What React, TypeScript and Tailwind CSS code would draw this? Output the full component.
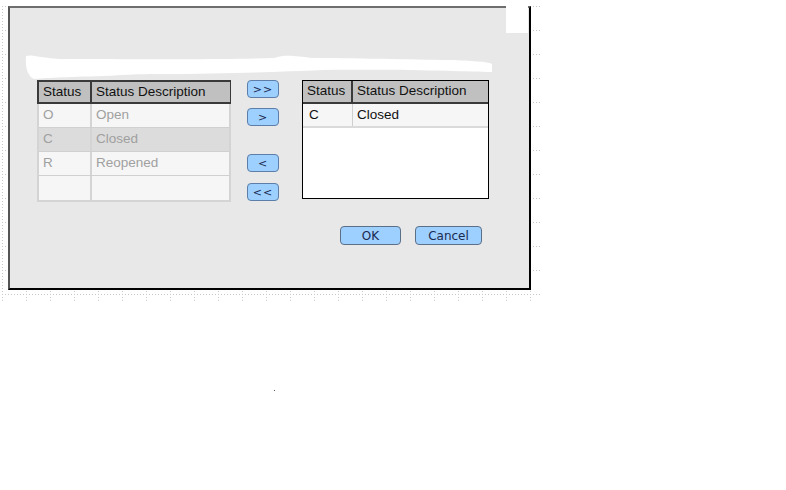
import React from 'react';

type Row = { code: string; desc: string };

const available: Row[] = [
    { code: 'O', desc: 'Open' },
    { code: 'C', desc: 'Closed' },
    { code: 'R', desc: 'Reopened' },
    { code: '', desc: '' },
];

const selected: Row[] = [{ code: 'C', desc: 'Closed' }];

const GridBackdrop = () => (
    <svg className="absolute inset-0" width="541" height="296">
        <defs>
            <pattern id="grid" width="24" height="24" patternUnits="userSpaceOnUse" x="2" y="0">
                <path d="M0 0.5 H24 M0.5 0 V24" stroke="#c8c8c8" strokeWidth="1" strokeDasharray="1 2" fill="none" />
            </pattern>
        </defs>
        <rect width="541" height="296" fill="url(#grid)" />
    </svg>
);

const MoveButton = ({ label, className = '' }: { label: string; className?: string }) => (
    <button
        type="button"
        className={`h-[18px] w-[32px] rounded-[4px] border border-[#5c7ea8] bg-[#9dcfff] text-[11px] leading-none tracking-[1px] text-[#1a2a50] ${className}`}
        style={{ fontFamily: '"DejaVu Sans", Verdana, sans-serif' }}
    >
        {label}
    </button>
);

const ActionButton = ({ label, width }: { label: string; width: string }) => (
    <button
        type="button"
        className={`h-[19px] ${width} rounded-[4px] border border-[#5c6f88] bg-[#9dcfff] text-[12px] leading-none text-[#1a2a50]`}
        style={{ fontFamily: '"DejaVu Sans", Verdana, sans-serif' }}
    >
        {label}
    </button>
);

export default function App() {
    return (
        <div className="relative h-[490px] w-[786px] bg-white" style={{ fontFamily: '"Liberation Sans", Arial, sans-serif' }}>
            <div className="relative h-[296px] w-[541px]">
                <GridBackdrop />

                {/* Dialog */}
                <div className="relative ml-[8px] mt-[6px] h-[284px] w-[523px] border-t-2 border-l-2 border-r-2 border-b-2 border-t-[#6e6e6e] border-l-[#555] border-r-black border-b-black bg-[#e8e8e8]">
                    {/* erased title smear */}
                    <svg className="absolute left-[14px] top-[42px]" width="470" height="32">
                        <path
                            d="M2 6 C8 4 14 8 40 9 C120 9 200 10 250 8 C262 4 270 6 290 8 C340 8 400 10 430 10 C450 11 466 12 468 14 L468 22 C440 22 400 19 300 20 C250 22 200 24 140 24 C110 24 100 25 80 26 C40 27 20 28 10 29 C4 26 1 18 2 6 Z"
                            fill="#ffffff"
                        />
                    </svg>
                    <div className="absolute right-[1px] top-[-4px] h-[29px] w-[22px] bg-white" />

                    <div className="flex flex-col pl-[27px] pt-[72px]">
                        <div className="flex items-start">
                            {/* Available statuses */}
                            <div className="w-[194px] text-[13.5px]">
                                <div className="flex h-[24px] border-t-2 border-l-2 border-r border-b-2 border-[#3a3a3a] bg-[#c0c0c0] text-[#111]">
                                    <div className="flex w-[53px] items-center border-r-2 border-[#3a3a3a] pl-[4px]">Status</div>
                                    <div className="flex flex-1 items-center pl-[4px]">Status Description</div>
                                </div>
                                <div className="border-x-2 border-b-2 border-[#d4d4d4] text-[#a0a0a0]">
                                    {available.map((row, i) => (
                                        <div
                                            key={i}
                                            className={`flex h-[24px] ${i < available.length - 1 ? 'border-b border-[#d0d0d0]' : ''} ${i === 1 ? 'bg-[#dcdcdc]' : 'bg-[#f6f6f6]'}`}
                                        >
                                            <div className="flex w-[53px] items-center border-r-2 border-[#d4d4d4] pl-[4px]">{row.code}</div>
                                            <div className="flex flex-1 items-center pl-[4px]">{row.desc}</div>
                                        </div>
                                    ))}
                                </div>
                            </div>

                            {/* Move buttons */}
                            <div className="ml-[16px] flex flex-col">
                                <MoveButton label=">>" />
                                <MoveButton label=">" className="mt-[10px]" />
                                <MoveButton label="<" className="mt-[28px]" />
                                <MoveButton label="<<" className="mt-[11px]" />
                            </div>

                            {/* Selected statuses */}
                            <div className="ml-[23px] h-[119px] w-[187px] border border-black bg-white text-[13.5px] text-[#111]">
                                <div className="flex h-[23px] border-b-2 border-[#3a3a3a] bg-[#c0c0c0]">
                                    <div className="flex w-[50px] items-center border-r-2 border-[#3a3a3a] pl-[4px]">Status</div>
                                    <div className="flex flex-1 items-center pl-[4px]">Status Description</div>
                                </div>
                                {selected.map((row, i) => (
                                    <div key={i} className="flex h-[24px] border-b-2 border-[#dadada] bg-[#f6f6f6]">
                                        <div className="flex w-[50px] items-center border-r border-[#cfcfcf] pl-[6px]">{row.code}</div>
                                        <div className="flex flex-1 items-center pl-[4px]">{row.desc}</div>
                                    </div>
                                ))}
                            </div>
                        </div>

                        <div className="mt-[24px] flex w-[452px] justify-end gap-[14px] pr-[7px]">
                            <ActionButton label="OK" width="w-[61px]" />
                            <ActionButton label="Cancel" width="w-[67px]" />
                        </div>
                    </div>
                </div>
            </div>
            <div className="absolute left-[274px] top-[384px] h-px w-px bg-[#555]" />
        </div>
    );
}
